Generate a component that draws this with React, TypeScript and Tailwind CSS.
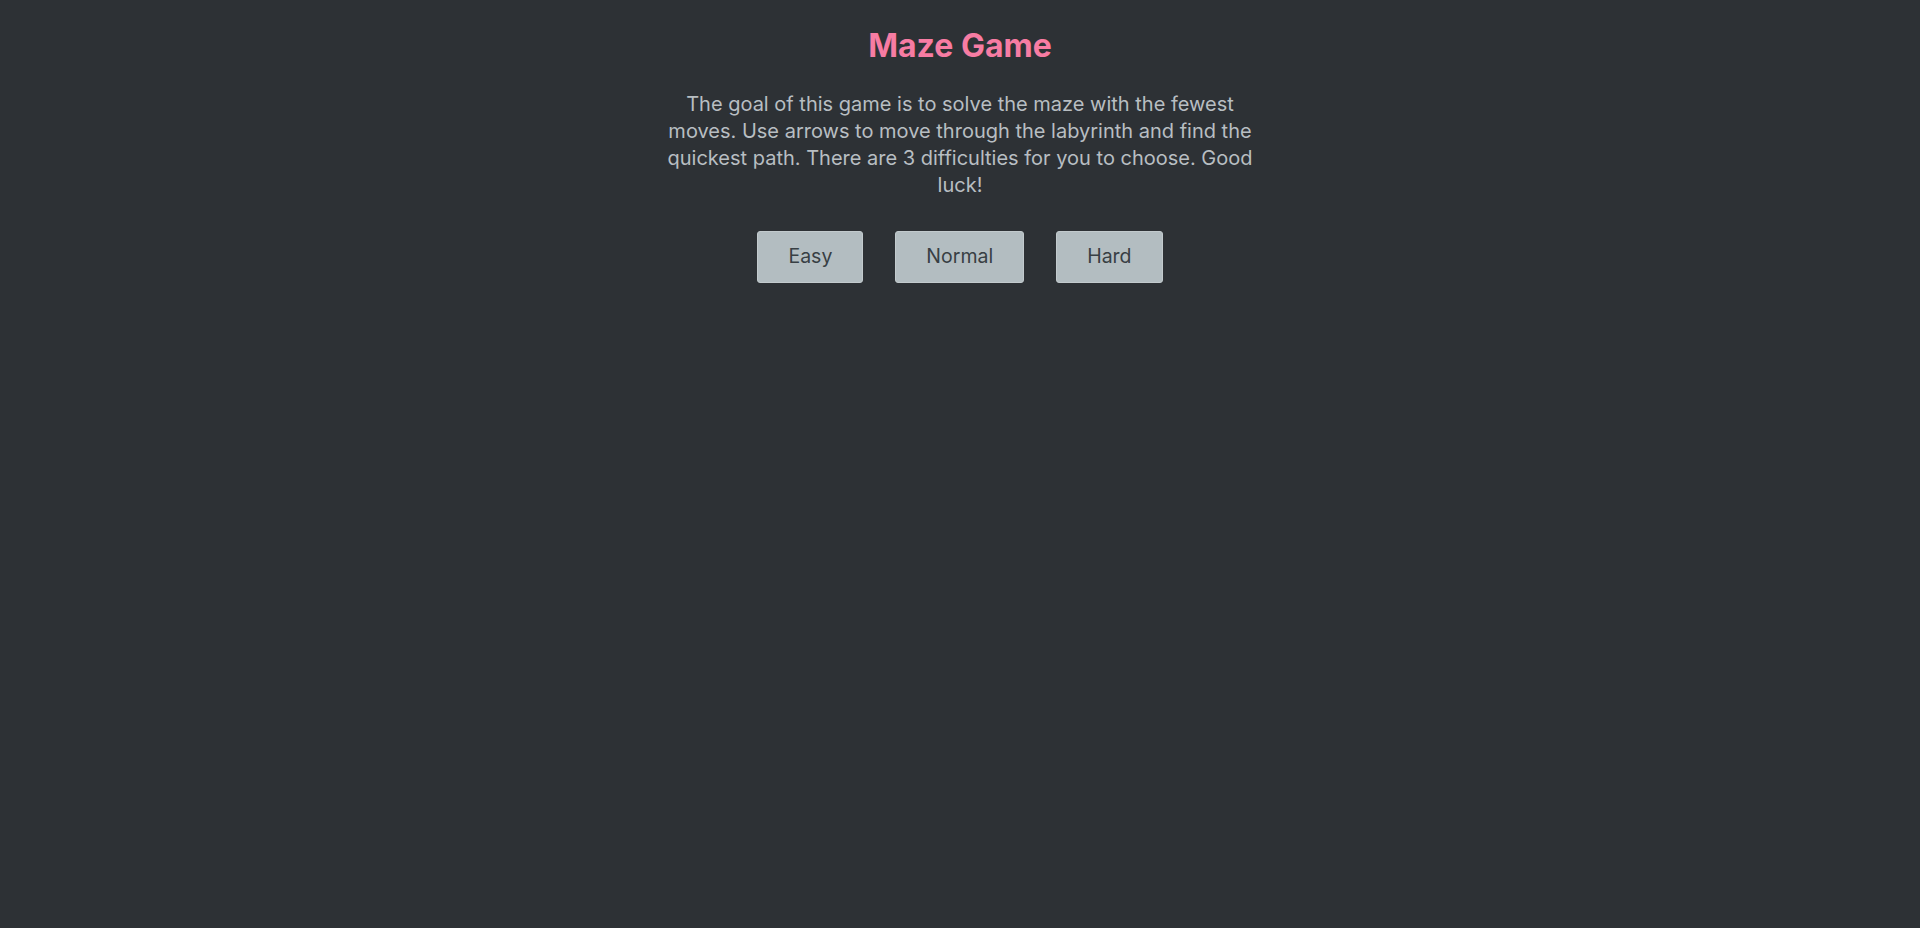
export default function App() {
  return (
    <div
      className="min-h-[928px] w-full bg-[#2d3135] flex flex-col items-center"
      style={{ fontFamily: "Inter, 'Noto Sans', sans-serif" }}
    >
      <h1 className="mt-[27px] text-[32px] leading-[38px] font-bold text-[#f77ca3]">Maze Game</h1>
      <p className="mt-[26px] w-[600px] text-center text-[20px] leading-[27px] text-[#b8bec2]">
        The goal of this game is to solve the maze with the fewest moves. Use arrows to move through the
        labyrinth and find the quickest path. There are 3 difficulties for you to choose. Good luck!
      </p>
      <div className="mt-[32px] flex gap-[32px]">
        {["Easy", "Normal", "Hard"].map((l) => (
          <button
            key={l}
            className="h-[52px] px-[30px] rounded-[3px] bg-[#b3bdc1] text-[#383f44] text-[19.5px] border border-[#c2cacd]"
          >
            {l}
          </button>
        ))}
      </div>
    </div>
  );
}
